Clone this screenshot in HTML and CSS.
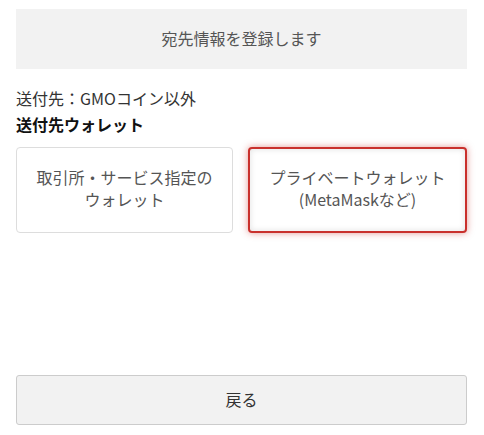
FILE: index.html
```html
<!DOCTYPE html>
<html lang="ja">
<head>
    <meta charset="UTF-8">
    <meta name="viewport" content="width=device-width, initial-scale=1.0">
    <title>送付先</title>
    <link rel="stylesheet" href="styles.css">
</head>
<body>
    <div class="page">
        <div class="header">宛先情報を登録します</div>

        <div class="info">
            <p class="dest">送付先：GMOコイン以外</p>
            <p class="title">送付先ウォレット</p>
        </div>

        <div class="choices">
            <button class="choice">取引所・サービス指定の<br>ウォレット</button>
            <button class="choice selected">プライベートウォレット<br>(MetaMaskなど)</button>
        </div>

        <button class="back-button">戻る</button>
    </div>
</body>
</html>
```

FILE: styles.css
```css
body {
    font-family: "Noto Sans CJK JP", "Noto Sans", sans-serif;
    background-color: #fff;
    margin: 0;
    color: #333;
}
.page {
    display: flex;
    flex-direction: column;
    height: 100vh;
    box-sizing: border-box;
    padding: 9px 17px 10px 16px;
}
.header {
    height: 60px;
    padding-bottom: 2px;
    box-sizing: border-box;
    background-color: #f2f2f2;
    display: flex;
    align-items: center;
    justify-content: center;
    font-size: 16px;
    color: #555;
}
.info {
    margin-top: 16px;
}
.info p {
    margin: 0;
    font-size: 16px;
    line-height: 26px;
}
.title {
    font-weight: bold;
    color: #111;
}
.choices {
    display: flex;
    gap: 15px;
    margin-top: 10px;
}
.choice {
    flex: 1;
    height: 86px;
    background-color: #fff;
    border: 1px solid #ddd;
    border-radius: 4px;
    font-family: inherit;
    font-size: 16px;
    line-height: 22px;
    color: #555;
    padding: 0 0 4px;
    cursor: pointer;
}
.choice.selected {
    border: 2px solid #c9302c;
    box-shadow: 0 0 7px rgba(201, 48, 44, 0.5), inset 0 0 6px rgba(0, 0, 0, 0.12);
}
.back-button {
    margin-top: auto;
    height: 50px;
    padding-bottom: 3px;
    background-color: #f2f2f2;
    border: 1px solid #ccc;
    border-radius: 3px;
    font-family: inherit;
    font-size: 16px;
    color: #333;
    cursor: pointer;
}
```
